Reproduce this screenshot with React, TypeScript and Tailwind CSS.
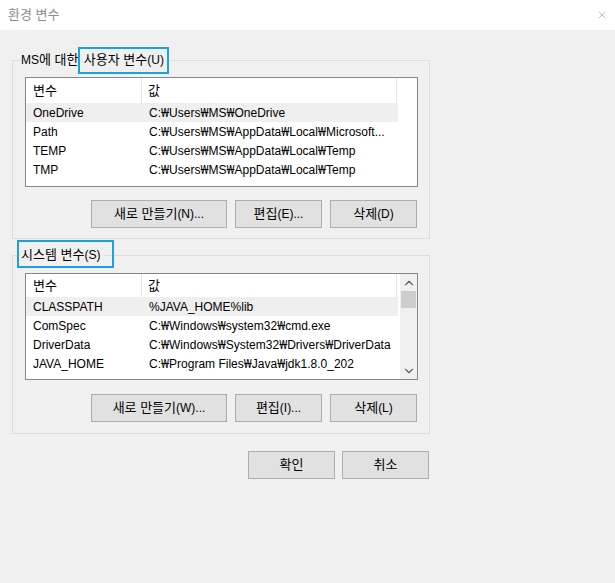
import { ChevronDown, ChevronUp, X } from 'lucide-react'

interface Row {
  name: string
  value: string
}

const userRows: Row[] = [
  { name: 'OneDrive', value: 'C:₩Users₩MS₩OneDrive' },
  { name: 'Path', value: 'C:₩Users₩MS₩AppData₩Local₩Microsoft...' },
  { name: 'TEMP', value: 'C:₩Users₩MS₩AppData₩Local₩Temp' },
  { name: 'TMP', value: 'C:₩Users₩MS₩AppData₩Local₩Temp' },
]

const systemRows: Row[] = [
  { name: 'CLASSPATH', value: '%JAVA_HOME%lib' },
  { name: 'ComSpec', value: 'C:₩Windows₩system32₩cmd.exe' },
  { name: 'DriverData', value: 'C:₩Windows₩System32₩Drivers₩DriverData' },
  { name: 'JAVA_HOME', value: 'C:₩Program Files₩Java₩jdk1.8.0_202' },
]

// hangul runs get the CJK font a touch larger, latin stays on Liberation Sans
function Ko({ text }: { text: string }) {
  const parts = text.split(/([\uAC00-\uD7A3]+(?: [\uAC00-\uD7A3]+)*)/)
  return (
    <>
      {parts.map((part, i) =>
        /[\uAC00-\uD7A3]/.test(part) ? (
          <span key={i} className="text-[13px]">
            {part}
          </span>
        ) : (
          part
        )
      )}
    </>
  )
}

// the won sign from Noto Sans is narrow like the Malgun one
function Path({ text }: { text: string }) {
  const parts = text.split('₩')
  return (
    <>
      {parts.map((part, i) => (
        <span key={i}>
          {i > 0 && <span className="font-['Noto_Sans',sans-serif]">₩</span>}
          {part}
        </span>
      ))}
    </>
  )
}

function ListView({
  rows,
  headerHeight,
  height,
  scrollbar,
}: {
  rows: Row[]
  headerHeight: string
  height: string
  scrollbar?: boolean
}) {
  return (
    <div className={`ml-[12px] flex w-[393px] ${height} overflow-hidden border border-[#828790] bg-white`}>
      <div className="w-[372px] shrink-0">
        <div className={`flex ${headerHeight} items-center`}>
          <div className="flex h-full w-[116px] items-center border-r border-[#e5e5e5] pl-[7px]">
            <Ko text="변수" />
          </div>
          <div className="flex h-full w-[255px] items-center border-r border-[#e5e5e5] pl-[6px]">
            <Ko text="값" />
          </div>
        </div>
        {rows.map((row, i) => (
          <div
            key={row.name}
            className={`flex h-[19px] items-center ${i === 0 ? 'bg-[#efefef]' : ''}`}
          >
            <div className="w-[116px] whitespace-nowrap pl-[7px]">{row.name}</div>
            <div className="w-[255px] whitespace-nowrap pl-[7px]">
              <Path text={row.value} />
            </div>
          </div>
        ))}
      </div>
      <div className="flex-1" />
      {scrollbar && (
        <div className="flex w-[17px] shrink-0 flex-col bg-[#f0f0f0]">
          <div className="flex h-[17px] items-center justify-center text-[#606060]">
            <ChevronUp className="h-[14px] w-[14px]" strokeWidth={2} />
          </div>
          <div className="mx-[1px] h-[17px] bg-[#cdcdcd]" />
          <div className="flex-1" />
          <div className="flex h-[17px] items-center justify-center text-[#606060]">
            <ChevronDown className="h-[14px] w-[14px]" strokeWidth={2} />
          </div>
        </div>
      )}
    </div>
  )
}

function Button({ label, width }: { label: string; width: string }) {
  return (
    <button
      className={`flex h-[28px] ${width} items-center justify-center border border-[#adadad] bg-[#e1e1e1] text-black`}
    >
      <Ko text={label} />
    </button>
  )
}

export default function App() {
  return (
    <div className="flex h-[583px] w-[615px] flex-col bg-[#f0f0f0] font-['Liberation_Sans','Noto_Sans_CJK_KR',sans-serif] text-[12px] leading-[16px] text-black">
      <div className="flex h-[30px] shrink-0 items-center justify-between bg-white pl-[8px] pr-[7px]">
        <span className="text-[#8c8c8c]">
          <Ko text="환경 변수" />
        </span>
        <X className="h-[12px] w-[12px] text-[#8c8c8c]" strokeWidth={1.2} />
      </div>

      <div className="pl-[12px] pt-[22px]">
        <fieldset className="w-[418px] border border-[#dcdcdc] pb-[10px]">
          <legend className="ml-[7px] pl-[1px] pr-[4px]">
            MS<Ko text="에 대한" />{' '}
            <span className="relative ml-[2px]">
              <Ko text="사용자 변수" />
              (U)
              <span className="absolute -bottom-[7px] -left-[6px] -right-[5px] -top-[6px] border-2 border-[#1ba1e2]" />
            </span>
          </legend>
          <div className="mt-[9px]">
            <ListView rows={userRows} headerHeight="h-[25px]" height="h-[110px]" />
          </div>
          <div className="mt-[13px] flex justify-end gap-[8px] pr-[12px]">
            <Button label="새로 만들기(N)..." width="w-[136px]" />
            <Button label="편집(E)..." width="w-[87px]" />
            <Button label="삭제(D)" width="w-[87px]" />
          </div>
        </fieldset>

        <fieldset className="mt-[8px] w-[418px] border border-[#dcdcdc] pb-[11px]">
          <legend className="ml-[7px] pl-[1px] pr-[4px]">
            <span className="relative">
              <Ko text="시스템 변수" />
              (S)
              <span className="absolute -bottom-[6px] -left-[4px] -right-[14px] -top-[8px] border-2 border-[#1ba1e2]" />
            </span>
          </legend>
          <div className="mt-[10px]">
            <ListView rows={systemRows} headerHeight="h-[23px]" height="h-[107px]" scrollbar />
          </div>
          <div className="mt-[14px] flex justify-end gap-[8px] pr-[12px]">
            <Button label="새로 만들기(W)..." width="w-[136px]" />
            <Button label="편집(I)..." width="w-[87px]" />
            <Button label="삭제(L)" width="w-[87px]" />
          </div>
        </fieldset>

        <div className="mt-[17px] flex w-[417px] justify-end gap-[7px]">
          <Button label="확인" width="w-[87px]" />
          <Button label="취소" width="w-[87px]" />
        </div>
      </div>
    </div>
  )
}
